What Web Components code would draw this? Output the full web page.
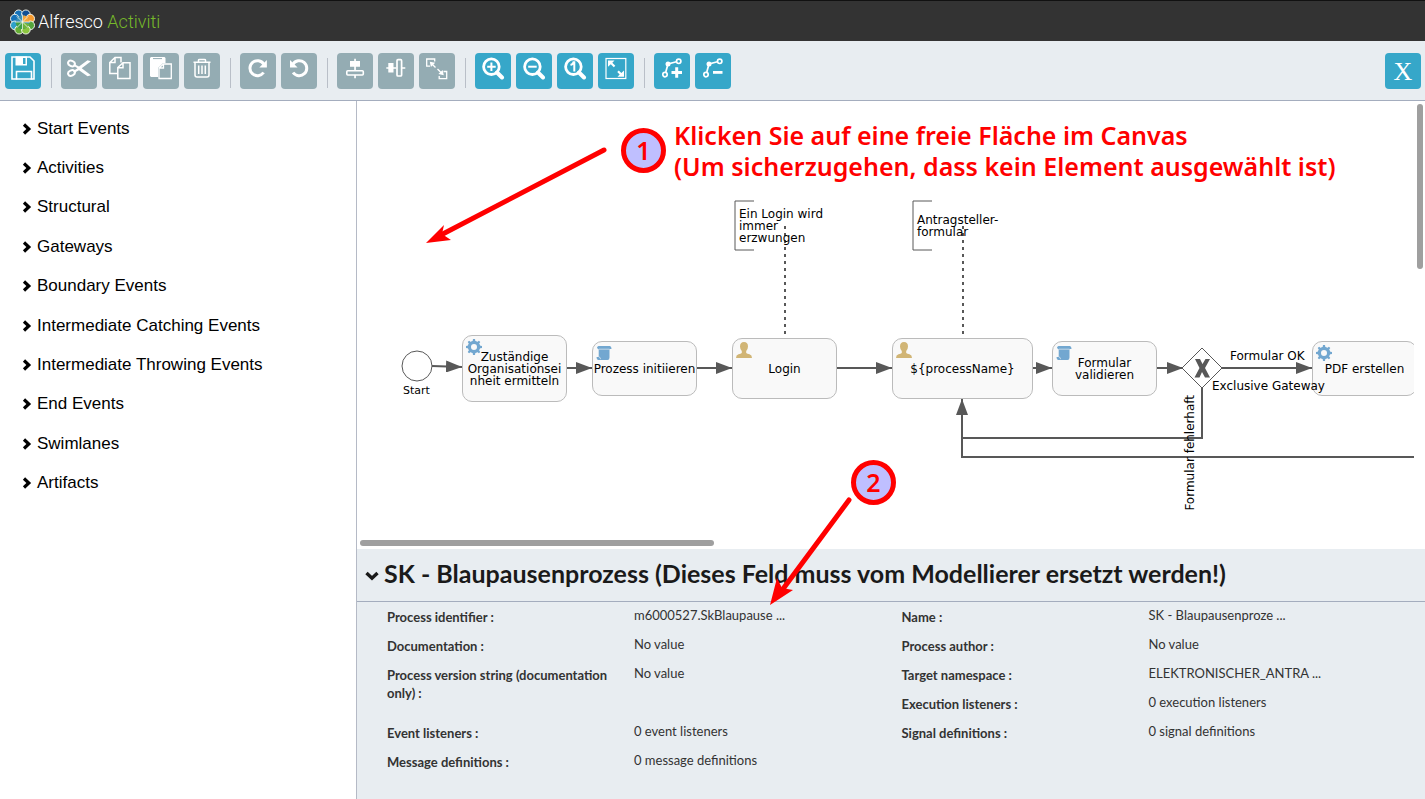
<!DOCTYPE html>
<html lang="de">
<head>
<meta charset="utf-8">
<meta name="viewport" content="width=device-width, initial-scale=1">
<title>Alfresco Activiti</title>
<style>
  body { margin: 0; background: #fff; font-family: Lato, "Open Sans", sans-serif; color: #333; }
</style>
</head>
<body>
<modeler-app></modeler-app>

<script>
function define(name, html, setup) {
  const template = document.createElement('template');
  template.innerHTML = html;
  customElements.define(name, class extends HTMLElement {
    connectedCallback() {
      if (this.shadowRoot) return;
      const root = this.attachShadow({ mode: 'open' });
      root.appendChild(template.content.cloneNode(true));
      if (setup) setup(this, root);
    }
  });
}

/* Toolbar glyphs on a 24 x 24 grid, drawn with currentColor */
const ICONS = {
  save: '<path d="M1 1h18l4 4v18H1z" fill="none" stroke="currentColor" stroke-width="1.6"/><path fill-rule="evenodd" d="M4.500 .5h11.500v9H4.500zM12 2h2.500v6H12z"/><path d="M5.500 23.500v-8h15v8" fill="none" stroke="currentColor" stroke-width="1.6"/>',
  cut: '<g fill="none" stroke="currentColor" stroke-width="2"><ellipse cx="4.500" cy="7.500" rx="3.500" ry="2.600" transform="rotate(25 4.500 7.500)"/><ellipse cx="4.500" cy="17" rx="3.500" ry="2.600" transform="rotate(-25 4.500 17)"/></g><path d="M7 8 12 10.500l8.500-6.200 3.500 1-9.300 7 9.300 7-3.500 1L12 14.300 7 17 6.300 15l4.200-2.700-4.200-2.700z"/>',
  copy: '<g fill="none" stroke="currentColor" stroke-width="1.500"><path d="M9.500 17.500H1.800V6.500L7 1.500h6v5M7 1.500v5H1.800"/><path d="M9.800 11.500 15 6.800h7V22.500H9.800zM15 6.800v4.900H9.800"/></g>',
  paste: '<path d="M2 1h13.500l1 1v5.300H14L9 12v9H2l-1-1V2z"/><path d="M4 2.600h9" stroke="#94acb3" stroke-width="1"/><path d="M10 12 14.500 8h7.800v14.500H10zM14.500 8v4H10" fill="#94acb3" stroke="currentColor" stroke-width="1.300"/>',
  trash: '<g fill="none" stroke="currentColor" stroke-width="1.500"><path d="M3.500 6.200h17M8.500 6V4q0-.6 1-.6h5q1 0 1 .6v2M5 6.500V19q0 2 2 2h10q2 0 2-2V6.500M8.700 9.500v8.500M12 9.500v8.500M15.300 9.500v8.500"/></g>',
  redo: '<path d="M17.600 16.500a7.500 7.500 0 1 1 .2-8.300" fill="none" stroke="currentColor" stroke-width="3"/><path d="M20.900 4v7.500h-7.600z"/>',
  undo: '<path d="M6.100 16.500a7.500 7.500 0 1 0-.2-8.300" fill="none" stroke="currentColor" stroke-width="3"/><path d="M3 4v7.500h7.600z"/>',
  alignV: '<path d="M7 5h10v5.700H7zM11.200 2.700h1.700v11.600h-1.700zM11.200 19h1.700v3.300h-1.700z"/><rect x="3.800" y="14.700" width="16.500" height="4.300" rx="1" fill="none" stroke="currentColor" stroke-width="1.600"/>',
  alignH: '<path d="M4.300 7h5.200v9.500H4.300zM2.300 11.200h10v1.600h-10zM18 11.200h3.300v1.600H18z"/><rect x="13" y="3.700" width="4.600" height="16.300" rx="1" fill="none" stroke="currentColor" stroke-width="1.700"/>',
  sameSize: '<g fill="none" stroke="currentColor" stroke-width="1.300"><path d="M5 10.200H1.700V3h8v2.500M18.500 15.500h3.200v7.200h-7.500V20M6 7l4.500 4.500M12.500 13l4.500 4.500"/></g><path d="M4.800 5.800l5.400 1L5.900 11zM18.800 19.300l-5.400-1.200 4.200-4.200z"/>',
  zoomIn: '<circle cx="10.400" cy="10.700" r="7.800" fill="none" stroke="currentColor" stroke-width="2.800"/><path d="M16 16.500l5 5" stroke="currentColor" stroke-width="4" stroke-linecap="round"/><path d="M10.400 6.500v8.500M6.200 10.700h8.500" stroke="currentColor" stroke-width="2"/>',
  zoomOut: '<circle cx="10.400" cy="10.700" r="7.800" fill="none" stroke="currentColor" stroke-width="2.800"/><path d="M16 16.500l5 5" stroke="currentColor" stroke-width="4" stroke-linecap="round"/><path d="M6.200 10.700h8.500" stroke="currentColor" stroke-width="2"/>',
  zoomActual: '<circle cx="10.400" cy="10.700" r="7.800" fill="none" stroke="currentColor" stroke-width="2.800"/><path d="M16 16.500l5 5" stroke="currentColor" stroke-width="4" stroke-linecap="round"/><path d="M7.500 9q2.500-.6 3-2.700h.8V15.500" fill="none" stroke="currentColor" stroke-width="2"/>',
  zoomFit: '<rect x="2" y="2.500" width="19.800" height="20" fill="none" stroke="currentColor" stroke-width="1.200"/><path d="M4 4.500h6.500L8.300 6.700l3 3-1.500 1.500-3-3L4 10.700zM20 20.700h-6.500l2.200-2.200-2.500-2.500 1.600-1.600 2.500 2.500 2.700-2.500z"/>',
  bendAdd: '<g fill="none" stroke="currentColor" stroke-width="1.700"><path d="M5.800 16 8 8l8.500-2.200"/><circle cx="18.700" cy="5.300" r="2.200"/><circle cx="5" cy="18.600" r="2.200"/></g><circle cx="8" cy="8" r="2.500"/><path d="M15.200 11.300h3v3.700H22v3h-3.800v3.700h-3V18h-3.700v-3h3.700z"/>',
  bendRemove: '<g fill="none" stroke="currentColor" stroke-width="1.700"><path d="M5.800 16 8 8l8.500-2.200"/><circle cx="18.700" cy="5.300" r="2.200"/><circle cx="5" cy="18.600" r="2.200"/></g><circle cx="8" cy="8" r="2.500"/><path d="M12 15h9.500v2.800H12z"/>'
};

/* Small type markers in the corner of a BPMN task */
const MARKERS = {
  service: '<g fill="#72a7d0"><path fill-rule="evenodd" d="M8 1.800a6.200 6.200 0 1 1 0 12.400A6.200 6.200 0 0 1 8 1.800zM8 5a3 3 0 1 0 0 6 3 3 0 0 0 0-6z"/><path d="M7 0h2l.5 3h-3zM7 16h2l.5-3h-3zM0 7v2l3 .5v-3zM16 7v2l-3 .5v-3zM1.700 3.100l1.400-1.400 2.400 1.700-2.100 2.100zM12.900 1.700l1.400 1.400-1.700 2.400-2.100-2.100zM1.700 12.900l1.400 1.400 2.400-1.700-2.100-2.100zM14.300 12.900l-1.400 1.400-2.400-1.700 2.100-2.100z"/></g>',
  script: '<path fill="#72a7d0" d="M2.500 1h11.500q1.500.5 1.500 3h-2v8.500q0 2.500-2 2.500H2Q.5 14.500.5 12h2.200V4.300Q1 3.500 1 2.500T2.500 1z"/><path d="M3 4.200h10.500M2.800 12h.8q.4 1.800 1.400 2" fill="none" stroke="#f9f9f9" stroke-width=".6"/>',
  user: '<path fill="#d1b575" d="M8 0q4 0 4 4.500 0 2.500-1.800 4.500v2q1 .8 3.300 1.300Q16 13 16 16H0q0-3 2.500-3.700Q4.800 11.800 5.800 11V9Q4 7 4 4.500 4 0 8 0z"/>'
};

define('modeler-app', `
<style>
  :host { display: flex; flex-direction: column; min-height: 100vh; }
  .body { flex: 1; display: flex; }
  stencil-palette { flex: none; width: 356px; }
  .work { position: relative; flex: 1; min-width: 0; display: flex; flex-direction: column; border-left: 1px solid #b5bac6; }
  process-canvas { flex: 1; }
</style>
<app-header></app-header>
<tool-bar></tool-bar>
<div class="body">
  <stencil-palette></stencil-palette>
  <main class="work">
    <process-canvas></process-canvas>
    <property-panel></property-panel>
    <guide-layer></guide-layer>
  </main>
</div>`);

define('app-header', `
<style>
  :host { display: block; background: #333; border-top: 1px solid #111; }
  header { height: 40px; display: flex; align-items: center; padding-left: 10px; }
  a { display: flex; align-items: center; gap: 3px; padding-top: 2px; color: #fff; text-decoration: none; font: 300 18px/24px Roboto, sans-serif; }
  svg { display: block; }
  b { font-weight: 300; color: #76b82a; }
</style>
<header><a href="#">
  <svg width="25" height="26" viewBox="-13 -13 26 26" aria-hidden="true">
    <g stroke="#f4f7ee" stroke-width="1">
      <g fill="#1673ba"><circle cx="-4" cy="-8" r="4.500"/><circle cx="-8" cy="-3.500" r="4.500"/></g>
      <circle cx="3.500" cy="-8" r="4.500" fill="#0f4f95"/>
      <circle cx="8" cy="-3.500" r="4.500" fill="#f79b2e"/>
      <circle cx="-8" cy="3.500" r="4.500" fill="#2ea0c8"/>
      <circle cx="8" cy="3.500" r="4.500" fill="#54a53c"/>
      <circle cx="-3.500" cy="8" r="4.500" fill="#65ad35"/>
      <circle cx="3.500" cy="8" r="4.500" fill="#8cc63f"/>
    </g>
    <circle r="7" fill="#3c8fb5"/>
    <path d="M0 0-7 0A7 7 0 0 0 4 6z" fill="#3f9f48"/><path d="M0 0 7 2A7 7 0 0 1 1 7z" fill="#72b53a"/><path d="M0 0 1-7A7 7 0 0 1 7 0z" fill="#f7a63b"/>
    <path d="M0-8V8M-8 0H8M-6-6 6 6M6-6-6 6" stroke="#f4f7ee" stroke-width=".8"/>
  </svg>
  <span>Alfresco <b>Activiti</b></span>
</a></header>`);

define('tool-button', `
<style>
  :host { display: block; }
  button { display: block; width: 36px; height: 36px; margin: 0; padding: 3px 6px 9px; border: 0; border-radius: 4px; background: #36a7c9; color: #fff; font: 26px/36px "Liberation Serif", serif; }
  button:disabled { background: #94acb3; }
  button.text { padding: 1px 0 0; }
  svg { display: block; fill: currentColor; }
</style>
<button type="button"><slot></slot></button>`, (el, root) => {
  const button = root.querySelector('button');
  button.disabled = el.hasAttribute('off');
  button.title = el.getAttribute('label');
  const icon = ICONS[el.getAttribute('icon')];
  if (icon) {
    button.setAttribute('aria-label', el.getAttribute('label'));
    button.innerHTML = '<svg width="24" height="24" viewBox="0 0 24 24" aria-hidden="true">' + icon + '</svg>';
  } else button.className = 'text';
});

define('tool-bar', `
<style>
  :host { display: block; background: #e8edf1; border-bottom: 1px solid #a4adbe; }
  nav { display: flex; gap: 5px; padding: 12px 4px 11px 5px; }
  i { width: 1px; height: 30px; margin: 5px 4px 0 5px; background: #b9bfc8; }
  .end { margin-left: auto; }
</style>
<nav aria-label="Werkzeuge">
  <tool-button icon="save" label="Save"></tool-button><i></i>
  <tool-button icon="cut" label="Cut" off></tool-button>
  <tool-button icon="copy" label="Copy" off></tool-button>
  <tool-button icon="paste" label="Paste" off></tool-button>
  <tool-button icon="trash" label="Delete" off></tool-button><i></i>
  <tool-button icon="redo" label="Redo" off></tool-button>
  <tool-button icon="undo" label="Undo" off></tool-button><i></i>
  <tool-button icon="alignV" label="Align vertically" off></tool-button>
  <tool-button icon="alignH" label="Align horizontally" off></tool-button>
  <tool-button icon="sameSize" label="Same size" off></tool-button><i></i>
  <tool-button icon="zoomIn" label="Zoom in"></tool-button>
  <tool-button icon="zoomOut" label="Zoom out"></tool-button>
  <tool-button icon="zoomActual" label="Actual size"></tool-button>
  <tool-button icon="zoomFit" label="Zoom to fit"></tool-button><i></i>
  <tool-button icon="bendAdd" label="Add bend point"></tool-button>
  <tool-button icon="bendRemove" label="Remove bend point"></tool-button>
  <tool-button class="end" label="Close">X</tool-button>
</nav>`);

define('stencil-group', `
<style>
  :host { display: flex; align-items: center; }
  button { display: flex; align-items: center; gap: 5px; margin: 0; padding: 0; border: 0; background: none; color: #000; font: 17px/20px "Liberation Sans", Arial, sans-serif; }
  svg { display: block; }
</style>
<button type="button" aria-expanded="false">
  <svg width="10" height="12" viewBox="0 0 10 12" aria-hidden="true"><path d="M2 1.500 6.800 6 2 10.500" fill="none" stroke="#000" stroke-width="3.200"/></svg>
  <slot></slot>
</button>`);

define('stencil-palette', `
<style>
  :host { display: block; }
  nav { display: grid; grid-auto-rows: 1fr; min-height: 394px; padding: 8px 0 0 22px; }
</style>
<nav aria-label="Elemente">
  <stencil-group>Start Events</stencil-group>
  <stencil-group>Activities</stencil-group>
  <stencil-group>Structural</stencil-group>
  <stencil-group>Gateways</stencil-group>
  <stencil-group>Boundary Events</stencil-group>
  <stencil-group>Intermediate Catching Events</stencil-group>
  <stencil-group>Intermediate Throwing Events</stencil-group>
  <stencil-group>End Events</stencil-group>
  <stencil-group>Swimlanes</stencil-group>
  <stencil-group>Artifacts</stencil-group>
</nav>`);

function place(el) {
  const [x, y, w, h] = el.getAttribute('at').split(' ');
  el.style.left = x + 'px';
  el.style.top = y + 'px';
  if (w) el.style.width = w + 'px';
  if (h) el.style.height = h + 'px';
}

define('bpmn-task', `
<style>
  :host { position: absolute; box-sizing: border-box; display: flex; align-items: center; justify-content: center; border: 1px solid #bbb; border-radius: 10px; background: #f9f9f9; text-align: center; white-space: pre; }
  svg { position: absolute; left: 3px; top: 3px; }
  span { z-index: 1; }
</style>
<svg width="16" height="16" viewBox="0 0 16 16" aria-hidden="true"></svg><span><slot></slot></span>`, (el, root) => {
  root.querySelector('svg').innerHTML = MARKERS[el.getAttribute('type')];
  place(el);
});

define('bpmn-label', `
<style>
  :host { position: absolute; display: flex; }
  span { white-space: pre; }
  :host([upright]) { writing-mode: vertical-rl; transform: rotate(180deg); }
  :host([small]) { font-size: 11px; }
</style>
<span><slot></slot></span>`, place);

define('process-canvas', `
<style>
  :host { position: relative; display: block; overflow: hidden; min-height: 448px; background: #fff; }
  .view { position: absolute; inset: 0 11px 0 0; overflow: hidden; color: #000; font: 12px/12px "DejaVu Sans", Verdana, sans-serif; }
  .edges { position: absolute; left: 0; top: 0; }
  .bar { position: absolute; border-radius: 3px; background: #9f9f9f; }
  .y { right: 2px; top: 3px; width: 6px; height: 165px; }
  .x { left: 3px; bottom: 3px; width: 354px; height: 6px; }
</style>
<div class="view">
  <svg class="edges" width="1100" height="448" viewBox="0 0 1100 448" fill="none" stroke="#585858" stroke-width="2">
    <defs><marker id="tip" markerUnits="userSpaceOnUse" markerWidth="16" markerHeight="12" refX="16" refY="6" orient="auto"><path d="M0 0 16 6 0 12z" fill="#585858" stroke="none"/></marker></defs>
    <circle cx="60" cy="265" r="15" stroke-width="1" fill="#fff"/>
    <g marker-end="url(#tip)">
      <path d="M75 265 105 266"/><path d="M210 267H235"/><path d="M340 267H375"/><path d="M480 267H535"/><path d="M676 267H695"/><path d="M800 267H826"/><path d="M865 267H955"/><path d="M1057 356H605V298"/>
    </g>
    <path d="M845 287V337H605"/>
    <path d="M845 247 865 267 845 287 825 267z" stroke-width="1" fill="#fff"/>
    <path d="M838 258h5l2.500 5 3-5h4.500l-5 9 5 9.500h-5l-3-5.500-2.500 5.500h-5l5-9.500z" fill="#585858" stroke="none"/>
    <path d="M428 125V234M606 125V234" stroke-dasharray="3 4"/>
    <path d="M397 100H378V149H397M575 100H556V149H575" stroke-width="1"/>
  </svg>
  <bpmn-label at="382 107">Ein Login wird
immer
erzwungen</bpmn-label>
  <bpmn-label at="560 113">Antragsteller-
formular</bpmn-label>
  <bpmn-task type="service" at="105 234 105 67">Zuständige
Organisationsei
nheit ermitteln</bpmn-task>
  <bpmn-task type="script" at="235 240 105 55">Prozess initiieren</bpmn-task>
  <bpmn-task type="user" at="375 237 105 61">Login</bpmn-task>
  <bpmn-task type="user" at="535 237 141 61">\${processName}</bpmn-task>
  <bpmn-task type="script" at="695 240 105 55">Formular
validieren</bpmn-task>
  <bpmn-task type="service" at="955 240 105 55">PDF erstellen</bpmn-task>
  <bpmn-label small at="46 284">Start</bpmn-label>
  <bpmn-label at="873 249">Formular OK</bpmn-label>
  <bpmn-label at="855 279">Exclusive Gateway</bpmn-label>
  <bpmn-label upright at="827 294">Formular fehlerhaft</bpmn-label>
</div>
<div class="bar y"></div><div class="bar x"></div>`);

define('property-row', `
<style>
  :host { display: grid; grid-template-columns: 48fr 52fr; min-height: 29px; font-size: 13px; line-height: 18px; }
  :host([tall]) { min-height: 58px; }
  dt { padding: 2px 15px 0 0; font-weight: 700; }
  dd { margin: 0; }
</style>
<dt></dt><dd><slot></slot></dd>`, (el, root) => {
  root.querySelector('dt').textContent = el.getAttribute('label') + ' :';
});

define('property-panel', `
<style>
  :host { display: block; background: #e8edf1; color: #333; }
  h2 { margin: 0; border-bottom: 1px solid #a4adbe; font-size: 25px; line-height: 52px; font-weight: 700; color: #1a1a1a; }
  button { display: flex; align-items: center; gap: 5px; width: 100%; height: 52px; margin: 0; padding: 0 0 4px 8px; border: 0; background: none; color: inherit; font: inherit; text-align: left; white-space: nowrap; }
  svg { flex: none; margin-top: 6px; }
  .cols { display: grid; grid-template-columns: 1fr 1fr; padding: 4px 9px 19px 30px; }
  dl { margin: 0; }
</style>
<section>
  <h2><button type="button" aria-expanded="true"><svg width="14" height="10" viewBox="0 0 14 10" aria-hidden="true"><path d="M1.500 2 7 7.200 12.500 2" fill="none" stroke="#1a1a1a" stroke-width="3.400"/></svg>SK - Blaupausenprozess (Dieses Feld muss vom Modellierer ersetzt werden!)</button></h2>
  <div class="cols">
    <dl>
      <property-row label="Process identifier">m6000527.SkBlaupause ...</property-row>
      <property-row label="Documentation">No value</property-row>
      <property-row tall label="Process version string (documentation only)">No value</property-row>
      <property-row label="Event listeners">0 event listeners</property-row>
      <property-row label="Message definitions">0 message definitions</property-row>
    </dl>
    <dl>
      <property-row label="Name">SK - Blaupausenproze ...</property-row>
      <property-row label="Process author">No value</property-row>
      <property-row label="Target namespace">ELEKTRONISCHER_ANTRA ...</property-row>
      <property-row label="Execution listeners">0 execution listeners</property-row>
      <property-row label="Signal definitions">0 signal definitions</property-row>
    </dl>
  </div>
</section>`);

define('guide-step', `
<style>
  :host { position: absolute; box-sizing: border-box; width: 45px; height: 45px; border: 5px solid #f00; border-radius: 50%; background: #bfbfff; text-align: center; line-height: 35px; }
</style>
<slot></slot>`, place);

define('guide-layer', `
<style>
  :host { position: absolute; inset: 0; overflow: hidden; pointer-events: none; color: #f00; font: 600 25px/31px "Noto Sans", "Open Sans", sans-serif; }
  svg { position: absolute; left: 0; top: 0; }
  p { position: absolute; left: 317px; top: 19px; margin: 0; white-space: nowrap; }
</style>
<svg width="1068" height="698" viewBox="0 0 1068 698" fill="#f00" stroke="#f00" stroke-linecap="round" aria-hidden="true">
  <path d="M247 49 80 136M492 399 423 492" stroke-width="5"/>
  <path d="M69 142 87 124 85 133 94 139zM413 504 420 477 425 487 436 489z" stroke="none"/>
</svg>
<guide-step at="264 27">1</guide-step>
<guide-step at="494 359">2</guide-step>
<p>Klicken Sie auf eine freie Fläche im Canvas<br>(Um sicherzugehen, dass kein Element ausgewählt ist)</p>`);
</script>
</body>
</html>
